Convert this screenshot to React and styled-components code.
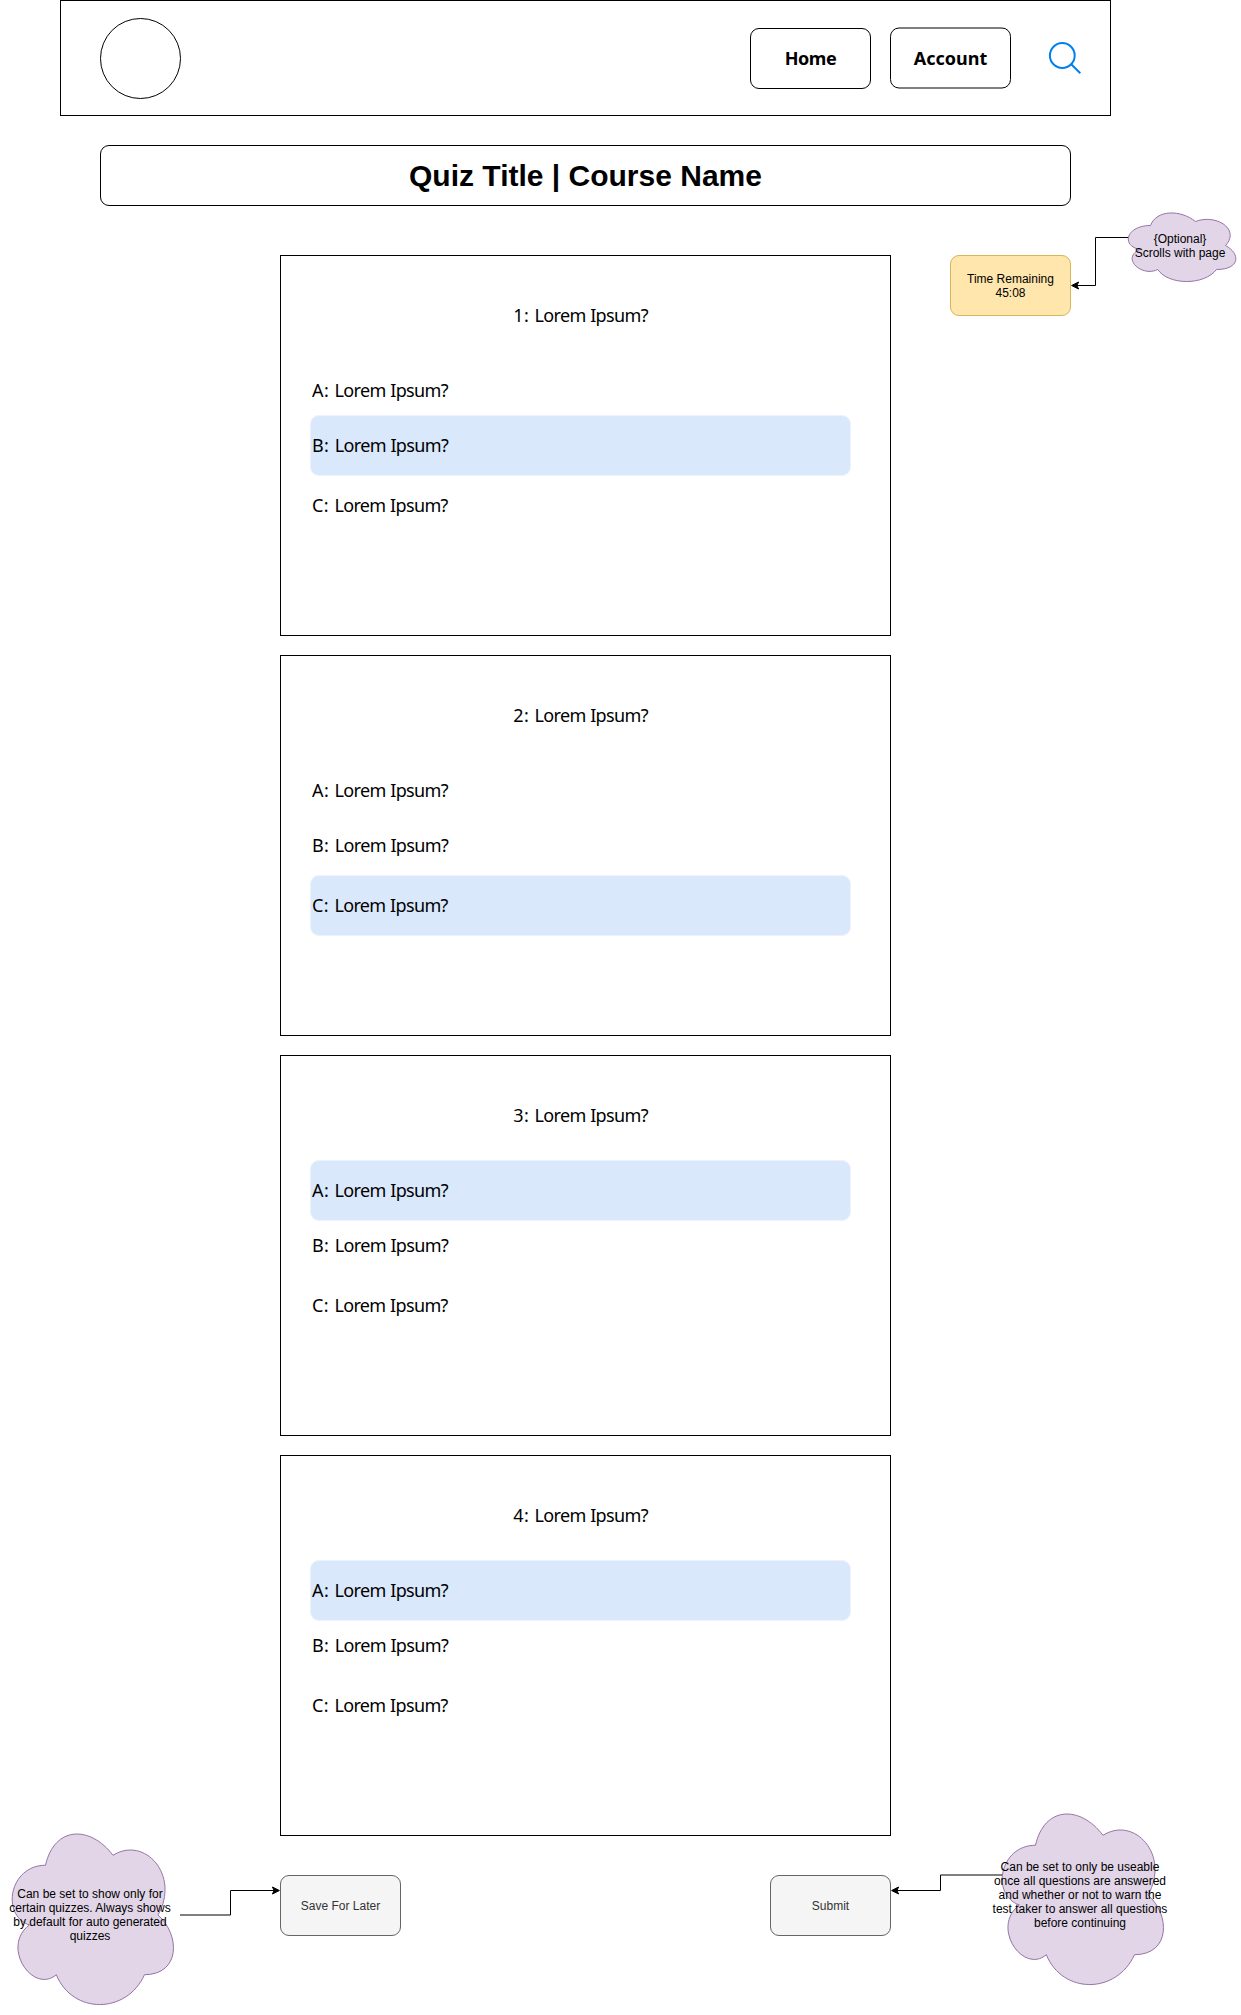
import React from "react";
import styled, { createGlobalStyle, css } from "styled-components";

const GlobalStyle = createGlobalStyle`
  *, *::before, *::after { box-sizing: border-box; }
  body { margin: 0; background: #fff; color: #000; }
`;

const sans = css`font-family: "Liberation Sans", Arial, Helvetica, sans-serif;`;
const humanist = css`font-family: Tahoma, "Noto Sans", sans-serif;`;

const Page = styled.div`
  position: relative;
  width: 1241px;
  height: 2015px;
  overflow: hidden;
  background: #fff;
  ${sans}
`;

const Header = styled.header`
  display: flex;
  align-items: flex-start;
  width: 1051px;
  height: 116px;
  margin-left: 60px;
  padding: 17px 28px 0 39px;
  border: 1px solid #000;
`;

const Logo = styled.div`
  width: 81px;
  height: 81px;
  border: 1px solid #000;
  border-radius: 50%;
`;

const Nav = styled.nav`
  display: flex;
  gap: 19px;
  margin: 10px 0 0 auto;
`;

const NavButton = styled.button`
  width: 121px;
  height: 61px;
  padding: 0 0 2px;
  border: 1px solid #000;
  border-radius: 9px;
  background: #fff;
  color: #000;
  ${humanist}
  font-size: 18px;
  font-weight: 700;
  line-height: 22px;
  letter-spacing: ${(p) => p.$tracking || 0}px;
  transform: ${(p) => (p.$raised ? "translateY(-0.5px)" : "none")};
`;

const SearchIcon = styled.svg`
  width: 34px;
  height: 34px;
  margin: 23px 0 0 37px;
  fill: none;
  stroke: #0080f0;
  stroke-width: 2;
`;

const TitleBar = styled.h1`
  display: flex;
  align-items: center;
  justify-content: center;
  width: 971px;
  height: 61px;
  margin: 29px 0 0 100px;
  border: 1px solid #000;
  border-radius: 9px;
  font-size: 30px;
  font-weight: 700;
  line-height: 36px;
`;

const Content = styled.main`
  display: flex;
  align-items: flex-start;
  gap: 59px;
  margin: 49px 0 0 280px;
`;

const Questions = styled.div`
  display: flex;
  flex-direction: column;
  gap: 19px;
  width: 611px;
`;

const Card = styled.section`
  height: 381px;
  padding: 29px;
  border: 1px solid #000;
`;

const Line = styled.p`
  display: flex;
  align-items: center;
  width: 541px;
  height: 61px;
  margin: 0;
  padding-bottom: 2px;
  ${humanist}
  font-size: 18px;
  line-height: 22px;
  letter-spacing: -0.65px;
  word-spacing: 0.5px;
`;

const Prompt = styled(Line)`
  justify-content: center;
  margin-bottom: 14px;
`;

const Answer = styled(Line)`
  margin-top: ${(p) => p.$lift}px;
  padding-left: 1px;
  border: 1px solid ${(p) => (p.$selected ? "#ecf3fd" : "transparent")};
  border-radius: 9px;
  background: ${(p) => (p.$selected ? "#dae8fc" : "transparent")};
`;

const Key = styled.span`
  margin-right: 5.4px;
  letter-spacing: 0.4px;
`;

const Box = styled.div`
  display: flex;
  align-items: center;
  justify-content: center;
  width: 121px;
  height: 61px;
  border: 1px solid ${(p) => p.$stroke};
  border-radius: 9px;
  background: ${(p) => p.$fill};
  color: ${(p) => p.$ink};
  ${sans}
  font-size: 12px;
  line-height: 14px;
  text-align: center;
  white-space: pre-line;
`;

const Actions = styled.footer`
  display: flex;
  justify-content: space-between;
  width: 611px;
  margin: 39px 0 0 280px;
`;

const Connectors = styled.svg`
  position: absolute;
  inset: 0;
  width: 1241px;
  height: 2015px;
  pointer-events: none;
`;

const Note = styled.aside`
  position: absolute;
  left: ${(p) => p.$x}px;
  top: ${(p) => p.$y}px;
  display: grid;
  grid-template: 100% / 100%;
  place-items: center;
  width: ${(p) => p.$w}px;
  height: ${(p) => p.$h}px;

  > * { grid-area: 1 / 1; }
`;

const CloudShape = styled.svg`
  width: 100%;
  height: 100%;
  overflow: visible;
  fill: #e1d5e7;
  stroke: #9673a6;
`;

const NoteText = styled.span`
  z-index: 1;
  padding-top: ${(p) => p.$drop || 0}px;
  font-size: 12px;
  line-height: 14px;
  text-align: center;
  white-space: pre;
`;

function CloudNote({ x, y, w, h, drop, children }) {
  const p = (a, b) => `${a * w + 0.5} ${b * h + 0.5}`;
  const d = [
    `M${p(0.25, 0.25)}`,
    `C${p(0.05, 0.25)} ${p(0, 0.5)} ${p(0.16, 0.55)}`,
    `C${p(0, 0.66)} ${p(0.18, 0.9)} ${p(0.31, 0.8)}`,
    `C${p(0.4, 1)} ${p(0.7, 1)} ${p(0.8, 0.8)}`,
    `C${p(1, 0.8)} ${p(1, 0.6)} ${p(0.875, 0.5)}`,
    `C${p(1, 0.3)} ${p(0.8, 0.1)} ${p(0.625, 0.2)}`,
    `C${p(0.5, 0.05)} ${p(0.3, 0.05)} ${p(0.25, 0.25)}Z`,
  ].join("");
  return (
    <Note $x={x} $y={y} $w={w} $h={h}>
      <CloudShape><path d={d} /></CloudShape>
      <NoteText $drop={drop}>{children}</NoteText>
    </Note>
  );
}

function Arrow({ line, x, y, dir }) {
  return (
    <g stroke="#000">
      <path d={line} fill="none" strokeMiterlimit="10" />
      <path
        d={`M${x} ${y}l${-7 * dir} 3.5l${1.75 * dir} -3.5l${-1.75 * dir} -3.5Z`}
        fill="#000"
        strokeMiterlimit="10"
      />
    </g>
  );
}

const questions = [
  { id: 1, selected: "B" },
  { id: 2, selected: "C" },
  { id: 3, selected: "A" },
  { id: 4, selected: "A" },
];

const options = [
  { key: "A", lift: 0 },
  { key: "B", lift: -6 },
  { key: "C", lift: -1 },
];

export default function App() {
  return (
    <Page>
      <GlobalStyle />
      <Header>
        <Logo />
        <Nav>
          <NavButton $tracking={-0.4}>Home</NavButton>
          <NavButton $raised>Account</NavButton>
        </Nav>
        <SearchIcon viewBox="0 0 34 34">
          <circle cx="14.3" cy="14.5" r="12.4" />
          <path d="M23.2 23.2L32.3 32.3" />
        </SearchIcon>
      </Header>
      <TitleBar>Quiz Title | Course Name</TitleBar>
      <Content>
        <Questions>
          {questions.map((q) => (
            <Card key={q.id}>
              <Prompt>
                <Key>{q.id}:</Key>
                <span>Lorem Ipsum?</span>
              </Prompt>
              {options.map((o) => (
                <Answer key={o.key} $lift={o.lift} $selected={q.selected === o.key}>
                  <Key>{o.key}:</Key>
                  <span>Lorem Ipsum?</span>
                </Answer>
              ))}
            </Card>
          ))}
        </Questions>
        <Box $fill="#ffe6ac" $stroke="#d6b656" $ink="#000">{"Time Remaining\n45:08"}</Box>
      </Content>
      <Actions>
        <Box as="button" $fill="#f5f5f5" $stroke="#666" $ink="#333">Save For Later</Box>
        <Box as="button" $fill="#f5f5f5" $stroke="#666" $ink="#333">Submit</Box>
      </Actions>
      <Connectors viewBox="0 0 1241 2015">
        <Arrow line="M1130 237.5H1095.5V285.5H1077" x={1071.6} y={285.5} dir={-1} />
        <Arrow line="M180 1915H230.5V1890.5H274" x={279.4} y={1890.5} dir={1} />
        <Arrow line="M1003 1875H940.5V1890.5H897" x={891.6} y={1890.5} dir={-1} />
      </Connectors>
      <CloudNote x={1120} y={205} w={120} h={80} drop={2}>{"{Optional}\nScrolls with page"}</CloudNote>
      <CloudNote x={0} y={1815} w={180} h={199}>
        {"Can be set to show only for\ncertain quizzes. Always shows\nby default for auto generated\nquizzes"}
      </CloudNote>
      <CloudNote x={990} y={1795} w={180} h={199}>
        {"Can be set to only be useable\nonce all questions are answered\nand whether or not to warn the\ntest taker to answer all questions\nbefore continuing"}
      </CloudNote>
    </Page>
  );
}
